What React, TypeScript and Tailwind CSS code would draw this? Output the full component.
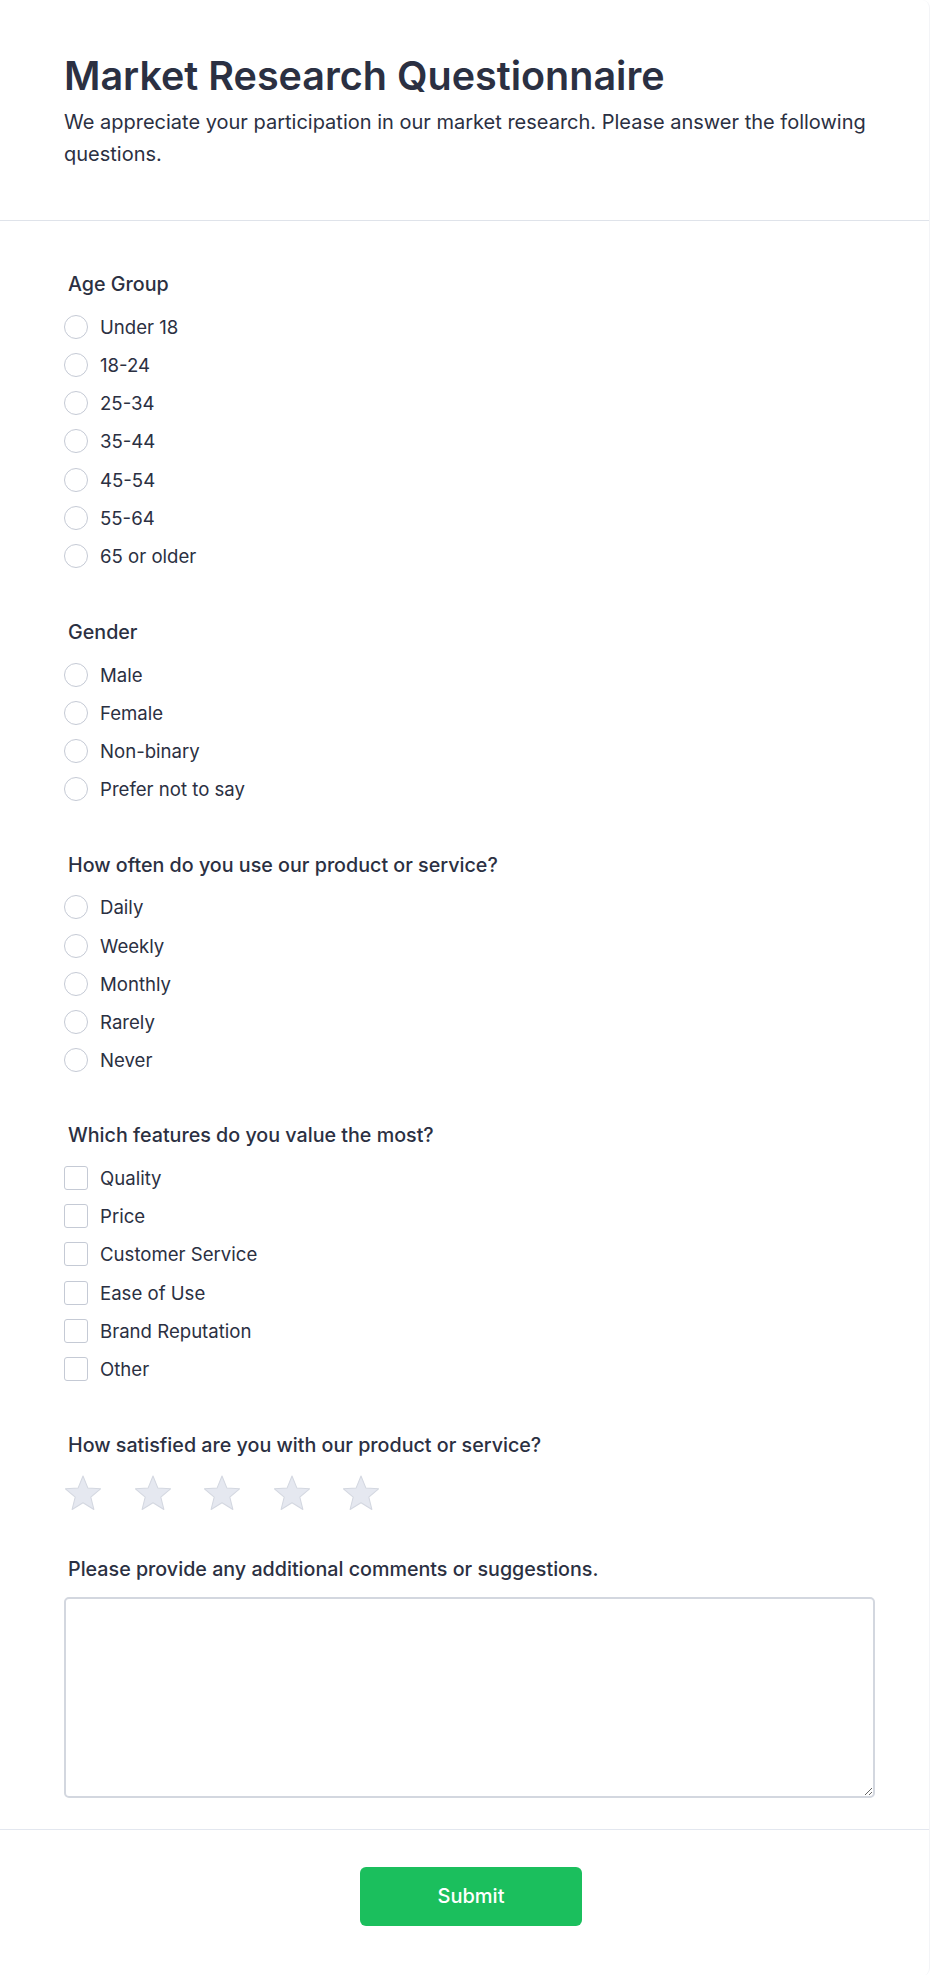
import React from "react";

const ageGroups = ["Under 18", "18-24", "25-34", "35-44", "45-54", "55-64", "65 or older"];
const genders = ["Male", "Female", "Non-binary", "Prefer not to say"];
const freqs = ["Daily", "Weekly", "Monthly", "Rarely", "Never"];
const features = ["Quality", "Price", "Customer Service", "Ease of Use", "Brand Reputation", "Other"];

function Star() {
  return (
    <svg width="38" height="36" viewBox="0 0 37 35" className="shrink-0">
      <polygon
        points="18.5,1 23.2,12.53 35.62,13.44 26.11,21.47 29.08,33.56 18.5,27 7.92,33.56 10.89,21.47 1.38,13.44 13.8,12.53"
        fill="#e5e8f0"
        stroke="#d3d7e0"
        strokeWidth="1"
        strokeLinejoin="round"
      />
    </svg>
  );
}

function Label({ children }: { children: React.ReactNode }) {
  return <div className="pl-1 text-[19.7px] leading-7 font-medium text-[#2b3042]">{children}</div>;
}

function OptionList({ items, type }: { items: string[]; type: "radio" | "checkbox" }) {
  return (
    <div className="mt-[14.5px] flex flex-col gap-[10.25px]">
      {items.map((it) => (
        <label key={it} className="flex h-7 items-center">
          {type === "radio" ? (
            <span className="h-6 w-6 shrink-0 rounded-full border-[1.5px] border-[#c5cad5] bg-white" />
          ) : (
            <span className="h-6 w-6 shrink-0 rounded-[3px] border-[1.5px] border-[#c5cad5] bg-white" />
          )}
          <span className="ml-3 text-[18.6px] leading-7 text-[#2b3042]">{it}</span>
        </label>
      ))}
    </div>
  );
}

export default function App() {
  return (
    <div
      className="min-h-[1975px] w-full bg-white"
      style={{ fontFamily: "Inter, 'Noto Sans', sans-serif" }}
    >
      <div className="w-[930px] rounded-lg border-r border-[#f3f4f7] bg-white">
        <div className="border-b border-[#dfe3ea] pt-14 pr-[54px] pb-[50px] pl-16">
          <h1 className="text-[39.5px] leading-10 font-semibold text-[#2b3042]">Market Research Questionnaire</h1>
          <p className="mt-2.5 text-xl leading-8 text-[#2b3042]">
            We appreciate your participation in our market research. Please answer the following questions.
          </p>
        </div>

        <div className="pt-[49px] pr-[54px] pl-16">
          <section>
            <Label>Age Group</Label>
            <OptionList items={ageGroups} type="radio" />
          </section>
          <section className="mt-[48px]">
            <Label>Gender</Label>
            <OptionList items={genders} type="radio" />
          </section>
          <section className="mt-[47.5px]">
            <Label>How often do you use our product or service?</Label>
            <OptionList items={freqs} type="radio" />
          </section>
          <section className="mt-[47px]">
            <Label>Which features do you value the most?</Label>
            <OptionList items={features} type="checkbox" />
          </section>
          <section className="mt-[47.5px]">
            <Label>How satisfied are you with our product or service?</Label>
            <div className="mt-4 flex items-center gap-[31.5px]">
              <Star />
              <Star />
              <Star />
              <Star />
              <Star />
            </div>
          </section>
          <section className="mt-[44px]">
            <Label>Please provide any additional comments or suggestions.</Label>
            <textarea className="mt-[14px] block h-[201px] w-full resize-y rounded-[5px] border-2 border-[#d3d7df] bg-white p-3 text-lg outline-none" />
          </section>
        </div>

        <div className="mt-[31px] flex justify-center border-t border-[#e3e7ef] pt-[37px] pr-[54px] pb-[50px] pl-[67px]">
          <button className="h-[59px] w-[222px] rounded-md bg-[#1bbf5d] text-[20px] font-medium text-white">
            Submit
          </button>
        </div>
      </div>
    </div>
  );
}
